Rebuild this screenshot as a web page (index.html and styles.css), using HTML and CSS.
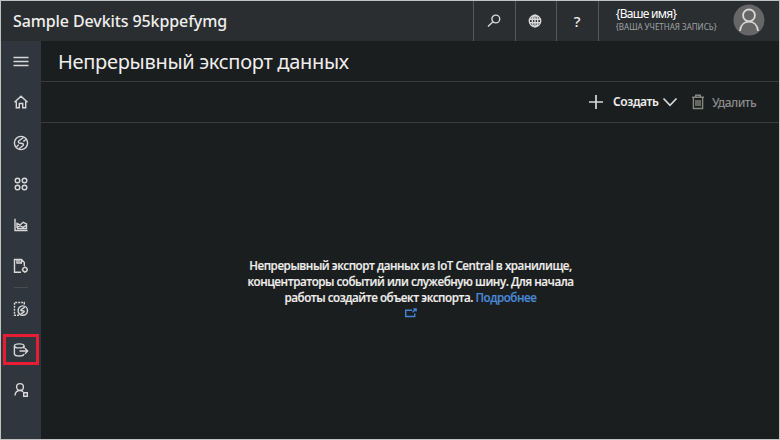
FILE: index.html
```html
<!DOCTYPE html>
<html lang="ru">
<head>
<meta charset="utf-8">
<title>Sample Devkits</title>
<link rel="stylesheet" href="styles.css">
</head>
<body>
<div class="app">
  <header class="topbar">
    <div class="brand"><span>Sample Devkits 95kppefymg</span></div>
    <div class="tool"><svg width="16" height="16" viewBox="0 0 16 16"><circle cx="9.8" cy="6" r="3.900"/><path d="M7 8.800L2 13.400"/></svg></div>
    <div class="tool"><svg width="16" height="16" viewBox="0 0 16 16"><circle cx="8" cy="8" r="5.700"/><ellipse cx="8" cy="8" rx="2.700" ry="5.700"/><path d="M2.500 6.200h11M2.500 9.800h11M8 2.300v11.400"/></svg></div>
    <div class="tool"><span class="help">?</span></div>
    <div class="account">
      <div class="who"><div class="name">{Ваше имя}</div><div class="tenant">{ВАША УЧЕТНАЯ ЗАПИСЬ}</div></div>
      <svg class="avatar" width="32" height="32" viewBox="0 0 32 32"><circle class="disc" cx="16" cy="16" r="15.500"/><circle cx="16" cy="11.400" r="5.900"/><path d="M7 27c.6-6 4.400-9.300 9-9.300s8.400 3.300 9 9.300"/></svg>
    </div>
  </header>
  <div class="body">
    <nav class="side">
      <div class="item"><svg width="16" height="16" viewBox="0 0 16 16"><path d="M.5 4.500h15M.5 8.500h15M.5 12.500h15"/></svg></div>
      <div class="item"><svg width="16" height="16" viewBox="0 0 16 16"><path d="M1.500 8.300L8 2.300l6.500 6M3.300 7.500v6.200h3V9.500h3.400v4.200h3V7.500"/></svg></div>
      <div class="item"><svg width="16" height="16" viewBox="0 0 16 16"><circle cx="8" cy="8" r="6.600"/><path d="M10.500 2.500L6 5.800q-1.500 1.400.2 2.200l3.100.5q2 .6.500 2.200L6 13.700M5.700 9.600L3.500 12M10.300 6.400L13 4.500"/></svg></div>
      <div class="item"><svg width="16" height="16" viewBox="0 0 16 16"><circle cx="4.500" cy="4.500" r="2.300"/><circle cx="11.500" cy="4.500" r="2.300"/><circle cx="4.500" cy="11.500" r="2.300"/><circle cx="11.500" cy="11.500" r="2.300"/></svg></div>
      <div class="item"><svg width="16" height="16" viewBox="0 0 16 16"><path d="M2 1.800v11.700h12.500M4 11V6.500l3 1.500 3.200-2.700L13.500 7v4.500H4M4 10.500l3-1.800 3 1.600 3.500-2.200"/></svg></div>
      <div class="item"><svg width="16" height="16" viewBox="0 0 16 16"><path d="M8 14.200H1.500V1.500h7l2.800 3V8M4 2v3h4.300V2M6 2v2"/><circle cx="11.900" cy="11.600" r="2.200"/><path d="M11.900 8.400v1M11.900 13.800v1M8.800 11.600h1M14 11.600h1"/></svg></div>
      <div class="rule"></div>
      <div class="item"><svg width="16" height="16" viewBox="0 0 16 16"><path stroke-dasharray="2 1" d="M6 14.300H1.500V1.500h9.800v2.300"/><circle cx="9.800" cy="9.600" r="4.700"/><path d="M11.800 6.200L8 8.700q-.6.900.7 1l2 .2q1 .4 0 1.200l-3 2"/></svg></div>
      <div class="item current"><svg width="16" height="16" viewBox="0 0 16 16"><ellipse cx="6.200" cy="3.900" rx="4.800" ry="2"/><path d="M1.400 4v8q.5 2 4.800 2 4.300 0 4.800-2M11 4v2.500M6.500 9h8M12 6.300L14.600 9 12 11.700"/></svg></div>
      <div class="item"><svg width="16" height="16" viewBox="0 0 16 16"><circle cx="7" cy="5" r="3.400"/><path d="M2 13.500q.4-5 5-5 2 0 3.200 1.200"/><path d="M10.700 10.700h3.600v3.600h-3.600z"/></svg></div>
    </nav>
    <main class="main">
      <h1><span>Непрерывный экспорт данных</span></h1>
      <div class="commands">
        <svg class="plus" width="16" height="16" viewBox="0 0 16 16"><path d="M8 1v14M1 8h14"/></svg>
        <span class="create">Создать</span>
        <svg class="chevron" width="16" height="12" viewBox="0 0 16 12"><path d="M1.500 2.500L8 9.300l6.500-6.800"/></svg>
        <svg class="trash" width="14" height="16" viewBox="0 0 14 16"><path d="M1 3.300h12M4.700 3V1.200h4.600V3M2.400 3.500v11h9.200v-11M5 6v6M7 6v6M9 6v6"/></svg>
        <span class="delete">Удалить</span>
      </div>
      <section class="empty">
        <p>Непрерывный экспорт данных из IoT Central в хранилище,</p>
        <p>концентраторы событий или служебную шину. Для начала</p>
        <p>работы создайте объект экспорта. <a>Подробнее</a></p>
        <svg width="14" height="12" viewBox="0 0 14 12"><path d="M8 3.200H1.700v6.300h9V6.500M8.500 5.300l3-2.700M9.300 1.900h2.800v2.600"/></svg>
      </section>
    </main>
  </div>
</div>
</body>
</html>
```
FILE: styles.css
```css
* { box-sizing: border-box; }
body { margin: 0; font-family: "Noto Sans", "Open Sans", sans-serif; color: #f0eeed; }
svg { display: block; fill: none; stroke: #d8d8d8; stroke-width: 1.4; flex: none; }
.app { width: 780px; height: 440px; border: 1px solid #c0c2c1; background: #1b1e1f; display: flex; flex-direction: column; overflow: hidden; white-space: nowrap; }
.topbar { height: 40px; background: #2a2e31; display: flex; flex: none; }
.brand { width: 472px; padding-left: 12px; line-height: 41px; font-size: 16px; font-weight: 500; letter-spacing: -0.1px; }
.tool { width: 41.600px; border-left: 1px solid #55585a; display: flex; align-items: center; justify-content: center; padding-right: 1px; }
.help { font-size: 15px; font-weight: 500; }
.account { flex: 1; border-left: 1px solid #55585a; padding: 0 14px 0 17px; display: flex; justify-content: space-between; }
.name { font-size: 12px; line-height: 14px; margin-top: 6px; color: #fff; letter-spacing: -0.7px; }
.tenant { font-size: 8px; line-height: 10px; margin-top: 1px; color: #a0a3a4; }
.avatar { margin-top: 3px; stroke-width: 1.800; }
.disc { fill: #666; stroke: none; }
.body { flex: 1; display: flex; }
.side { width: 40px; background: #30363e; }
.item { height: 41px; display: flex; align-items: center; justify-content: center; padding: 0 1px 1px 0; }
.rule { width: 14px; height: 1px; margin: 0 auto; background: #484c50; }
.rule + .item { padding-bottom: 0; }
.side .current { width: 36px; height: 31px; margin: 5px 2px; padding: 0 1px 0 0; border: 3px solid #e81c32; }
.main { flex: 1; }
h1 { margin: 0; height: 41px; padding-left: 17px; line-height: 42px; font-size: 20px; font-weight: 400; letter-spacing: -0.3px; border-bottom: 1px solid #3a3c3e; }
.commands { height: 41px; border-bottom: 1px solid #3a3c3e; display: flex; align-items: center; padding-left: 547px; font-size: 12px; }
.plus { stroke-width: 1.700; margin-right: 9px; }
.create { width: 49px; font-weight: 600; letter-spacing: -0.4px; position: relative; top: -1px; }
.chevron { stroke-width: 1.700; margin-right: 13px; }
.trash { stroke: #85877f; margin-right: 7px; }
.delete { color: #8a8c8d; font-weight: 500; letter-spacing: -0.5px; }
.empty { padding: 135px 0 0 1px; font-family: "Open Sans", "Noto Sans", sans-serif; font-size: 11.600px; font-weight: 600; line-height: 16px; letter-spacing: -0.45px; -webkit-text-stroke: 0.150px; display: flex; flex-direction: column; align-items: center; }
.empty p { margin: 0; }
.empty a { color: #4a8ad8; }
.empty svg { stroke: #3f85d8; margin-top: 1px; }
```
